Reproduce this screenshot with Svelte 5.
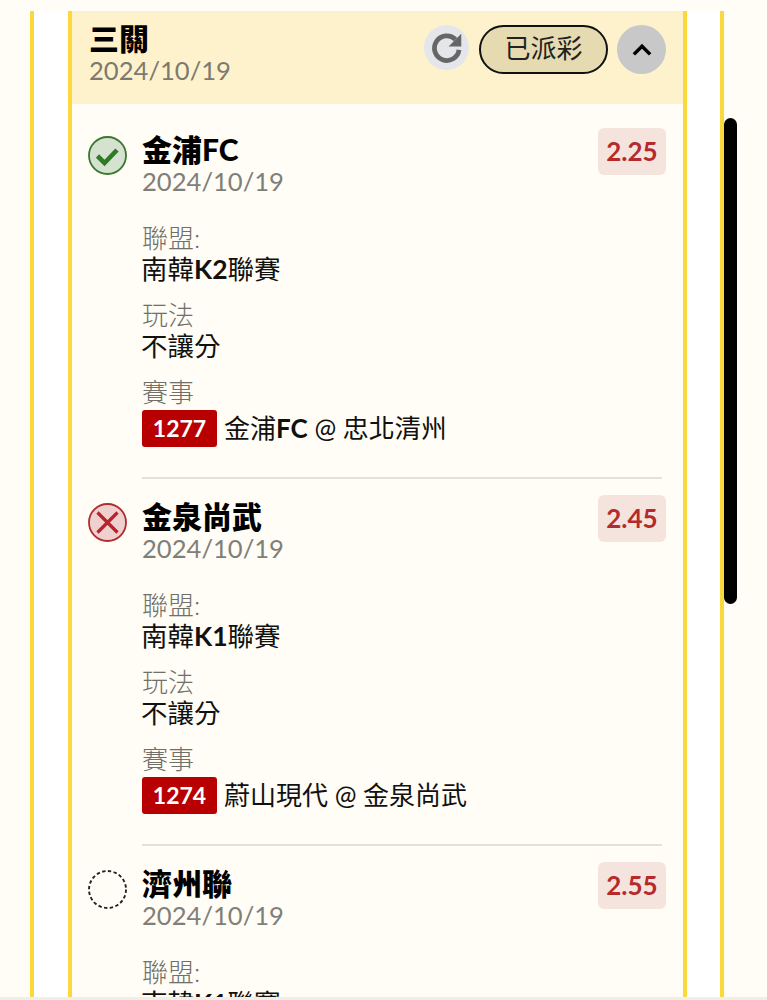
<script>
	const legs = [
		{ name: '金浦FC', odds: '2.25', status: 'won', league: '南韓K2聯賽', no: '1277', match: '金浦FC @ 忠北清州' },
		{ name: '金泉尚武', odds: '2.45', status: 'lost', league: '南韓K1聯賽', no: '1274', match: '蔚山現代 @ 金泉尚武' },
		{ name: '濟州聯', odds: '2.55', status: 'open', league: '南韓K1聯賽', no: '1270', match: '濟州聯 @ 大田韓亞' }
	]

	// latin parts of a value are drawn heavier than the CJK around them
	const parts = (s) => s.split(/([A-Za-z0-9]+)/)
</script>

<main>
	<div class="outer">
		<section class="card">
			<header>
				<div class="head-text">
					<h1>三關</h1>
					<p class="date">2024/10/19</p>
				</div>
				<button class="refresh" aria-label="refresh">
					<svg viewBox="0 0 24 24" width="38" height="38">
						<path d="M19.600 13.200A7.800 7.800 0 1 1 17.400 6.600" fill="none" stroke="#666" stroke-width="3" />
						<path d="M21 3v8h-8z" fill="#666" />
					</svg>
				</button>
				<span class="pill">已派彩</span>
				<button class="toggle" aria-label="collapse">
					<svg viewBox="0 0 24 24" width="30" height="30">
						<path d="M5.500 15.500 12 9l6.500 6.500" fill="none" stroke="#000" stroke-width="2.800" />
					</svg>
				</button>
			</header>

			{#each legs as leg}
				<article>
					<div class="icon">
						{#if leg.status === 'won'}
							<svg viewBox="0 0 39 39" width="39" height="39">
								<circle cx="19.500" cy="19.500" r="18.500" fill="#d5e2d0" stroke="#39782f" stroke-width="1.800" />
								<path d="M9.500 20 16.500 27 29 14" fill="none" stroke="#2f7a25" stroke-width="4.600" />
							</svg>
						{:else if leg.status === 'lost'}
							<svg viewBox="0 0 39 39" width="39" height="39">
								<circle cx="19.500" cy="19.500" r="18.500" fill="#f0cfcf" stroke="#b02a30" stroke-width="1.800" />
								<path d="M9.500 9.500 29.500 29.500M29.500 9.500 9.500 29.500" fill="none" stroke="#b8232b" stroke-width="3.200" />
							</svg>
						{:else}
							<svg viewBox="0 0 39 39" width="39" height="39">
								<circle cx="19.500" cy="19.500" r="18.500" fill="none" stroke="#222" stroke-width="1.900" stroke-dasharray="3.400 2.400" />
							</svg>
						{/if}
					</div>
					<div class="body">
						<div class="top">
							<div>
								<h2>{leg.name}</h2>
								<p class="date">2024/10/19</p>
							</div>
							<span class="odds">{leg.odds}</span>
						</div>
						<div class="field">
							<div class="label">聯盟:</div>
							<div class="value">
								{#each parts(leg.league) as p, i}{#if i % 2}<b>{p}</b>{:else}{p}{/if}{/each}
							</div>
						</div>
						<div class="field">
							<div class="label">玩法</div>
							<div class="value">不讓分</div>
						</div>
						<div class="field">
							<div class="label">賽事</div>
							<div class="value match">
								<span class="no">{leg.no}</span>
								<span>{#each parts(leg.match) as p, i}{#if i % 2}<b>{p}</b>{:else}{p}{/if}{/each}</span>
							</div>
						</div>
					</div>
				</article>
			{/each}
		</section>
	</div>
	<div class="scrollbar"></div>
	<div class="bottom"></div>
</main>

<style>
	:global(body) {
		background: #fffdf5;
	}

	main {
		position: relative;
		height: 1000px;
		overflow: hidden;
		padding-top: 11px;
		box-sizing: border-box;
		background: #fffdf5;
		font-family: Lato, "Noto Sans CJK TC", sans-serif;
		color: #111;
	}

	.outer {
		width: 694px;
		margin-left: 30px;
		padding: 0 33px 0 34px;
		box-sizing: border-box;
		background: #fff;
		border-left: 4px solid #fbd83c;
		border-right: 4px solid #fbd83c;
	}

	.card {
		background: #fffdf5;
		border-left: 4px solid #fbd83c;
		border-right: 4px solid #fbd83c;
	}

	header {
		height: 93px;
		display: flex;
		align-items: flex-start;
		padding: 14px 17px 0 17px;
		box-sizing: border-box;
		background: #fef2cd;
	}

	.head-text {
		flex: 1;
	}

	h1, h2 {
		margin: 0;
		font-size: 30px;
		line-height: 30px;
		font-weight: 900;
		color: #000;
	}

	h1 {
		margin-top: -2px;
		margin-bottom: 1px;
	}

	.date {
		margin: 0;
		font-size: 25.6px;
		line-height: 32px;
		color: #7c7a70;
	}

	button {
		padding: 0;
		border: 0;
		border-radius: 50%;
		display: grid;
		place-items: center;
	}

	.refresh {
		width: 45px;
		height: 45px;
		background: #e4e6ea;
		margin-right: 10px;
	}

	.pill {
		width: 129px;
		height: 49px;
		box-sizing: border-box;
		border: 2px solid #111;
		border-radius: 25px;
		background: #e6dbb0;
		color: #222;
		text-align: center;
		font-size: 26px;
		font-weight: 400;
		line-height: 43px;
		margin-right: 9px;
	}

	.toggle {
		width: 49px;
		height: 49px;
		background: #c8c8c8;
	}

	article {
		display: flex;
		margin: 0 21px 0 16px;
		padding-top: 24px;
		height: 367px;
		box-sizing: border-box;
	}

	.icon {
		width: 54px;
		flex: none;
		padding-top: 8px;
	}

	.body {
		flex: 1;
		height: 349px;
		border-bottom: 2px solid #e3e1da;
	}

	article:last-child .body {
		border-bottom: 0;
	}

	.top {
		display: flex;
		justify-content: space-between;
		align-items: flex-start;
		margin-bottom: 26px;
		margin-right: -4px;
	}

	h2 {
		padding-top: 6px;
		line-height: 31px;
	}

	.top .date {
		color: #7f7f7a;
	}

	.odds {
		width: 68px;
		height: 47px;
		border-radius: 6px;
		background: #f5e4de;
		color: #b52b2b;
		font-size: 26px;
		font-weight: 700;
		line-height: 47px;
		text-align: center;
	}

	.field {
		margin-bottom: 15px;
	}

	.label {
		font-size: 26px;
		line-height: 31px;
		font-weight: 300;
		color: #70706a;
	}

	.value {
		margin-left: -1px;
		font-size: 26.500px;
		line-height: 31px;
		color: #111;
	}

	.value b {
		font-weight: 700;
	}

	.match {
		display: flex;
		align-items: center;
		gap: 8px;
		margin-left: 0;
		margin-top: 1px;
		font-size: 26px;
		line-height: 38px;
		white-space: nowrap;
	}

	.match span:last-child {
		margin-left: -1px;
	}

	.no {
		width: 75px;
		height: 37px;
		border-radius: 3px;
		background: #b80000;
		color: #fff;
		font-size: 23px;
		font-weight: 700;
		line-height: 37px;
		text-align: center;
	}

	.scrollbar {
		position: absolute;
		left: 724px;
		top: 118px;
		width: 13px;
		height: 486px;
		border-radius: 7px;
		background: #000;
	}

	.bottom {
		position: absolute;
		left: 0;
		right: 0;
		bottom: 0;
		height: 3px;
		background: #efeee9;
	}
</style>
